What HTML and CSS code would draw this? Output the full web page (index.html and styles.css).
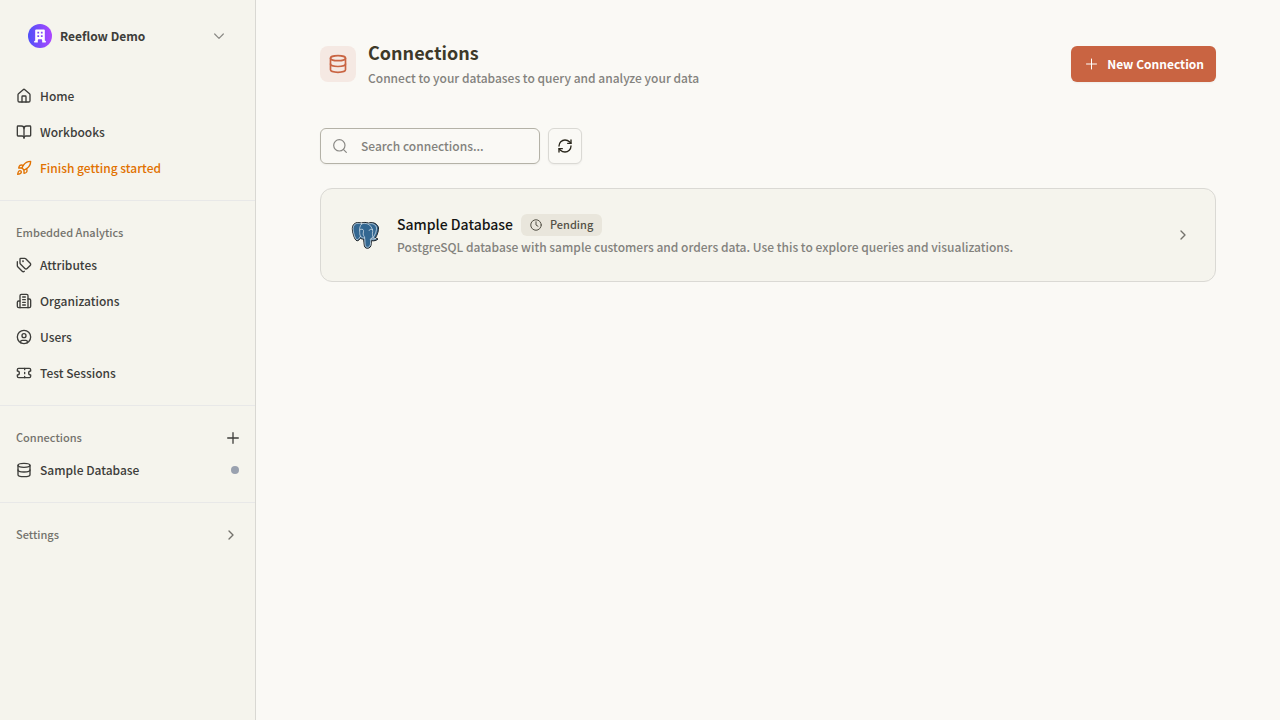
FILE: index.html
```html
<!DOCTYPE html>
<html lang="en">
<head>
<meta charset="utf-8">
<meta name="viewport" content="width=device-width, initial-scale=1">
<title>Connections</title>
<link rel="stylesheet" href="styles.css">
</head>
<body class="app">
<aside class="sidebar">
  <div class="org">
    <button class="org-button" type="button">
      <span class="avatar">
        <svg class="avatar-icon" viewBox="0 0 16 16"><path fill="#fff" fill-rule="evenodd" d="M3.500 .5h9c.6 0 1 .4 1 1v12h.3c.5 0 1 .4 1 1s-.5 1-1 1h-3.300v-2.500c0-.8-.5-1.300-1.300-1.300H6.800c-.8 0-1.300.5-1.300 1.300v2.500H2.200c-.5 0-1-.4-1-1s.5-1 1-1h.3v-12c0-.6.4-1 1-1zM5 3v2h2V3zm4 0v2h2V3zM5 7v2h2V7zm4 0v2h2V7z"/></svg>
      </span>
      <span class="org-name">Reeflow Demo</span>
      <svg class="icon muted icon-chevron" viewBox="0 0 24 24"><path d="m5.500 9 6.500 6.500L18.500 9"/></svg>
    </button>
  </div>

  <nav class="section" aria-label="Main">
    <a class="nav-link" href="#home">
      <svg class="icon" viewBox="0 0 24 24"><path d="M15 21v-8a1 1 0 0 0-1-1h-4a1 1 0 0 0-1 1v8"/><path d="M3 10a2 2 0 0 1 .709-1.528l7-5.999a2 2 0 0 1 2.582 0l7 5.999A2 2 0 0 1 21 10v9a2 2 0 0 1-2 2H5a2 2 0 0 1-2-2z"/></svg>
      Home</a>
    <a class="nav-link" href="#workbooks">
      <svg class="icon" viewBox="0 0 24 24"><path d="M12 7v14"/><path d="M3 18a1 1 0 0 1-1-1V4a1 1 0 0 1 1-1h5a4 4 0 0 1 4 4 4 4 0 0 1 4-4h5a1 1 0 0 1 1 1v13a1 1 0 0 1-1 1h-6a3 3 0 0 0-3 3 3 3 0 0 0-3-3z"/></svg>
      Workbooks</a>
    <a class="nav-link highlight" href="#start">
      <svg class="icon" viewBox="0 0 24 24"><path d="M4.500 16.500c-1.500 1.260-2 5-2 5s3.740-.5 5-2c.71-.84.7-2.130-.09-2.910a2.180 2.180 0 0 0-2.910-.09z"/><path d="m12 15-3-3a22 22 0 0 1 2-3.950A12.880 12.880 0 0 1 22 2c0 2.720-.78 7.500-6 11a22.350 22.350 0 0 1-4 2z"/><path d="M9 12H4s.55-3.030 2-4c1.620-1.080 5 0 5 0"/><path d="M12 15v5s3.030-.55 4-2c1.080-1.620 0-5 0-5"/></svg>
      Finish getting started</a>
  </nav>

  <nav class="section" aria-label="Embedded Analytics">
    <div class="section-head"><span class="section-label">Embedded Analytics</span></div>
    <a class="nav-link" href="#attributes">
      <svg class="icon" viewBox="0 0 24 24"><path d="M13.172 2a2 2 0 0 1 1.414.586l6.710 6.710a2.400 2.400 0 0 1 0 3.408l-4.592 4.592a2.400 2.400 0 0 1-3.408 0l-6.710-6.710A2 2 0 0 1 6 9.172V3a1 1 0 0 1 1-1z"/><path d="M2 7v6.172a2 2 0 0 0 .586 1.414l6.710 6.710a2.400 2.400 0 0 0 3.191.193"/><circle cx="10.500" cy="6.500" r=".5"/></svg>
      Attributes</a>
    <a class="nav-link" href="#organizations">
      <svg class="icon" viewBox="0 0 24 24"><path d="M6 22V4a2 2 0 0 1 2-2h8a2 2 0 0 1 2 2v18Z"/><path d="M6 12H4a2 2 0 0 0-2 2v6a2 2 0 0 0 2 2h2"/><path d="M18 9h2a2 2 0 0 1 2 2v9a2 2 0 0 1-2 2h-2"/><path d="M10 6h4M10 10h4M10 14h4M10 18h4"/></svg>
      Organizations</a>
    <a class="nav-link" href="#users">
      <svg class="icon" viewBox="0 0 24 24"><circle cx="12" cy="12" r="10"/><circle cx="12" cy="10" r="3"/><path d="M7 20.662V19a2 2 0 0 1 2-2h6a2 2 0 0 1 2 2v1.662"/></svg>
      Users</a>
    <a class="nav-link" href="#sessions">
      <svg class="icon" viewBox="0 0 24 24"><path d="M2 9a3 3 0 0 1 0 6v2a2 2 0 0 0 2 2h16a2 2 0 0 0 2-2v-2a3 3 0 0 1 0-6V7a2 2 0 0 0-2-2H4a2 2 0 0 0-2 2Z"/><path d="M13 5v2M13 17v2M13 11v2"/></svg>
      Test Sessions</a>
  </nav>

  <nav class="section" aria-label="Connections">
    <div class="section-head">
      <span class="section-label">Connections</span>
      <button class="icon-button" type="button" aria-label="Add connection"><svg class="plus-small" viewBox="0 0 12 12"><path d="M6 .7v10.600M.7 6h10.600"/></svg></button>
    </div>
    <a class="nav-link" href="#sample">
      <svg class="icon" viewBox="0 0 24 24"><ellipse cx="12" cy="5" rx="9" ry="3"/><path d="M3 5v14a9 3 0 0 0 18 0V5"/><path d="M3 12a9 3 0 0 0 18 0"/></svg>
      Sample Database
      <span class="dot"></span></a>
  </nav>

  <div class="section">
    <button class="section-head settings" type="button">
      <span class="section-label">Settings</span>
      <svg class="icon" viewBox="0 0 24 24"><path d="m9 18 6-6-6-6"/></svg>
    </button>
  </div>
</aside>

<main class="main">
  <header class="page-head">
    <span class="page-icon"><svg class="icon icon-lg" viewBox="0 0 24 24"><ellipse cx="12" cy="5" rx="9" ry="3"/><path d="M3 5v14a9 3 0 0 0 18 0V5"/><path d="M3 12a9 3 0 0 0 18 0"/></svg></span>
    <div class="page-titles">
      <h1 class="page-title">Connections</h1>
      <p class="text-muted">Connect to your databases to query and analyze your data</p>
    </div>
    <button class="primary" type="button">
      <svg class="icon icon-thin" viewBox="0 0 16 16"><path d="M8.500 3v10M3.500 8h10"/></svg>
      New Connection</button>
  </header>

  <div class="toolbar">
    <label class="search">
      <svg class="icon muted icon-search" viewBox="0 0 24 24"><circle cx="11" cy="11" r="8.500"/><path d="m21.500 21.500-4.500-4.500"/></svg>
      <input class="search-input" type="search" placeholder="Search connections..." aria-label="Search connections">
    </label>
    <button class="refresh" type="button" aria-label="Refresh"><svg class="icon" viewBox="0 0 24 24"><path d="M3 12a9 9 0 0 1 9-9 9.750 9.750 0 0 1 6.740 2.740L21 8"/><path d="M21 3v5h-5"/><path d="M21 12a9 9 0 0 1-9 9 9.750 9.750 0 0 1-6.740-2.740L3 16"/><path d="M8 16H3v5"/></svg></button>
  </div>

  <a class="card" href="#sample">
    <span class="card-logo">
      <svg class="logo" viewBox="0 0 28 28">
        <path fill="#336791" stroke="#1c2126" stroke-width="1" stroke-linejoin="round" d="M10.500 2C8 1 1.500.8 1.300 7.500c0 3.500 2.200 11.800 4.700 12.300 1.500.2 2.500-1.600 3.600-2.600.9.800 1.800 1 3 .9.500 2.500.2 5 .8 7 .5 1.800 2.300 2.600 4.300 2 2.800-1 2.400-3.700 2.700-7.400 2.500.4 5-.1 6.600-1.700-.7-.8-2-.6-2.800-.8 2.200-3.400 4-8.500 3-11.400-1.700-4-6.500-5-9.700-3.700-2.300-.9-5-.8-7-.1z"/>
        <path fill="#336791" stroke="#fff" stroke-width=".6" stroke-linejoin="round" stroke-linecap="round" d="M10.700 2.700C8 1.700 2.200 1.700 2.100 7.600c0 3.400 2.100 11 4 11.200 1.200.1 2.500-2.600 3.400-3.600 1 1.500 2.300 2 4 1.600.8 2.400.1 6 .8 8 .4 1.300 1.900 1.800 3.200 1.300 2.600-.8 1.800-4 2.300-8.200 2 .6 3.700.5 5.200-.3-1-.4-2 .1-3-.8 2.300-3.100 4.200-8.300 3.400-10.800-1.500-3.400-5.500-4-8.200-2.900-2.200-.9-4.800-.8-6.500-.4z"/>
        <path fill="none" stroke="#dfe8ef" stroke-width=".7" stroke-linecap="round" d="M10.700 2.800C8.500 5 8.500 8 8.700 10c.1 2-.3 3.400.8 5.200M8.700 8.800c1.300-.8 3.500-1 3.800.7.3 2-.8 3-.1 4.600.6 1.300 1.200 1.400 1.300 2.700M17.500 3.200c3.300 2.300 4.100 5.500 4.200 7.200-.6 2.600 0 4.300.3 6.500-.8.3-1.700-.2-2.500 1.200M21.600 8.700c-1.400-.7-3.300-.5-3.500.7"/>
      </svg>
    </span>
    <span class="card-body">
      <span class="card-top">
        <span class="card-title">Sample Database</span>
        <span class="badge"><svg class="badge-icon" viewBox="0 0 24 24"><circle cx="12" cy="12" r="10.500"/><path d="M12 5.500V12l4 2.500"/></svg><span class="badge-label">Pending</span></span>
      </span>
      <span class="text-muted">PostgreSQL database with sample customers and orders data. Use this to explore queries and visualizations.</span>
    </span>
    <svg class="icon chevron" viewBox="0 0 24 24"><path d="m9 18 6-6-6-6"/></svg>
  </a>
</main>
</body>
</html>
```
FILE: styles.css
```css
*, *::before, *::after { box-sizing: border-box; }

.app {
  display: flex;
  min-height: 100vh;
  margin: 0;
  background: #faf9f5;
  color: #3d3d3a;
  font-family: "Noto Sans CJK SC", "Noto Sans", sans-serif;
  font-size: 12px;
  font-weight: 500;
  line-height: 20px;
}

button, input { font: inherit; color: inherit; }
button { cursor: pointer; }
a { color: inherit; text-decoration: none; }

.icon {
  flex: none;
  width: 16px;
  height: 16px;
  fill: none;
  stroke: currentColor;
  stroke-width: 2;
  stroke-linecap: round;
  stroke-linejoin: round;
}
.icon-lg { width: 20px; height: 20px; }
.icon-thin { stroke-width: 1; }
.icon-search, .icon-chevron { stroke-width: 1.8; }
.muted { color: #8a8985; }

.sidebar {
  flex: none;
  width: 256px;
  background: #f5f4ed;
  border-right: 1px solid #d9d8d3;
}

.org { padding: 16px 16px 0; }
.org-button {
  display: flex;
  align-items: center;
  gap: 8px;
  width: 100%;
  height: 40px;
  padding: 0 12px;
  border: 0;
  background: none;
  text-align: left;
}
.org-name {
  flex: 1;
  font-weight: 700;
}
.avatar {
  display: flex;
  align-items: center;
  justify-content: center;
  width: 24px;
  height: 24px;
  border-radius: 50%;
  background: linear-gradient(90deg, #4f50f8, #ad46ff);
}
.avatar-icon { width: 14px; height: 14px; }

.section {
  display: flex;
  flex-direction: column;
  gap: 4px;
  padding: 16px;
  border-top: 1px solid #e8e8e8;
}
.org + .section { padding-top: 24px; border-top: 0; }
.section-head {
  display: flex;
  align-items: center;
  justify-content: space-between;
  height: 32px;
  margin-bottom: -4px;
  color: #73726c;
  font-size: 11px;
}
.section-label, .badge-label, .card-title { padding-bottom: 2px; }
.settings {
  width: 100%;
  padding: 0;
  border: 0;
  background: none;
}
.icon-button {
  display: flex;
  padding: 0;
  border: 0;
  background: none;
}
.plus-small {
  width: 12px;
  height: 12px;
  fill: none;
  stroke: #3d3d3a;
  stroke-width: 1.3;
  stroke-linecap: round;
}
.nav-link {
  display: flex;
  align-items: center;
  gap: 8px;
  height: 32px;
}
.highlight { color: #e17100; }
.dot {
  width: 8px;
  height: 8px;
  margin-left: auto;
  border-radius: 50%;
  background: #99a1af;
}

.main {
  flex: 1;
  min-width: 0;
  padding: 40px 64px;
}
.page-head {
  display: flex;
  align-items: center;
  gap: 12px;
  margin-bottom: 40px;
}
.page-icon {
  display: flex;
  align-items: center;
  justify-content: center;
  width: 36px;
  height: 36px;
  border-radius: 8px;
  background: #f5e9e3;
  color: #c96442;
}
.page-titles { flex: 1; }
.page-title {
  margin: 0 0 4px;
  color: #3d3929;
  font-size: 18px;
  font-weight: 700;
  line-height: 24px;
}
.text-muted { margin: 0; color: #83827d; }
.primary {
  display: flex;
  align-items: center;
  gap: 8px;
  height: 36px;
  padding: 0 12px;
  border: 0;
  border-radius: 6px;
  background: #c96442;
  color: #fff;
  font-weight: 700;
  box-shadow: 0 1px 2px rgba(0, 0, 0, 0.05);
}

.toolbar {
  display: flex;
  gap: 8px;
  margin-bottom: 24px;
}
.search {
  display: flex;
  align-items: center;
  gap: 12px;
  width: 220px;
  height: 36px;
  padding: 0 12px 0 11px;
  border: 1px solid #b4b2a7;
  border-radius: 6px;
  box-shadow: 0 1px 2px rgba(0, 0, 0, 0.05);
}
.search-input {
  flex: 1;
  min-width: 0;
  padding: 0 0 0 1px;
  border: 0;
  outline: 0;
  background: none;
}
.search-input::placeholder { color: #83827d; opacity: 1; }
.refresh {
  display: flex;
  align-items: center;
  justify-content: center;
  width: 34px;
  height: 36px;
  padding: 0;
  border: 1px solid #dad9d4;
  border-radius: 6px;
  background: #faf9f5;
  color: #29261b;
  box-shadow: 0 1px 2px rgba(0, 0, 0, 0.05);
}

.card {
  display: flex;
  align-items: center;
  gap: 12px;
  padding: 24px;
  border: 1px solid #dad9d4;
  border-radius: 12px;
  background: #f5f4ed;
}
.card-logo {
  display: flex;
  justify-content: center;
  width: 40px;
}
.logo { width: 28px; height: 28px; }
.card-body {
  display: flex;
  flex: 1;
  flex-direction: column;
  min-width: 0;
}
.card-top {
  display: flex;
  align-items: center;
  gap: 8px;
  height: 24px;
}
.card-title { color: #141413; font-size: 14px; }
.badge {
  display: flex;
  align-items: center;
  gap: 8px;
  height: 22px;
  padding: 0 9px;
  border-radius: 6px;
  background: #e9e6dc;
  color: #535146;
  font-size: 11px;
}
.badge-icon {
  width: 12px;
  height: 12px;
  fill: none;
  stroke: currentColor;
  stroke-width: 2;
  stroke-linecap: round;
}
.chevron { color: #73726c; }
```
